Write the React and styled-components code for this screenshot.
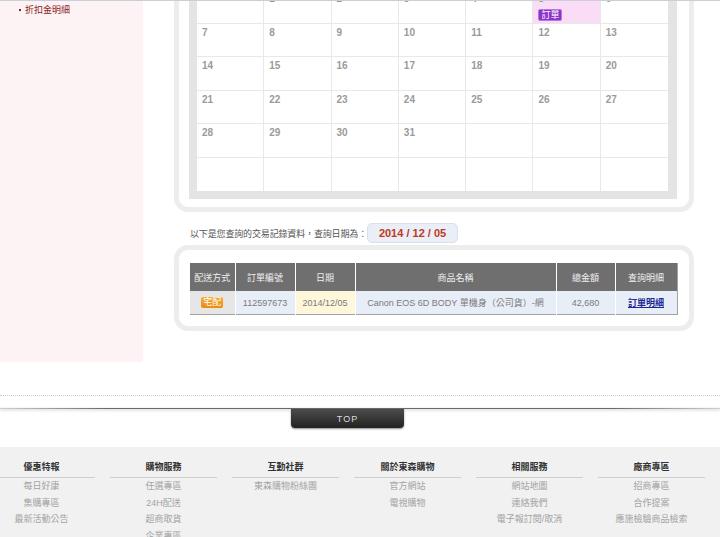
import React from "react";
import styled, { createGlobalStyle } from "styled-components";

const GlobalStyle = createGlobalStyle`
  html, body { margin: 0; padding: 0; background: #fff; }
  body {
    width: 720px;
    overflow: hidden;
    font-family: "Liberation Sans", Arial, "Noto Sans CJK TC", sans-serif;
  }
`;

const Page = styled.div`
  border-top: 1px solid #c9ced7;
`;

const Main = styled.div`
  display: flex;
  align-items: flex-start;
  overflow: hidden;
`;

const Sidebar = styled.aside`
  flex-shrink: 0;
  box-sizing: border-box;
  width: 143px;
  height: 361px;
  padding: 2px 0 0 19px;
  background: #fdf3f4;
`;

const SideLink = styled.a`
  display: flex;
  align-items: center;
  gap: 4px;
  font-size: 9px;
  line-height: 14px;
  color: #8b2323;
  text-decoration: none;
  &::before {
    content: "";
    width: 2px;
    height: 2px;
    background: #8b2323;
  }
`;

const Content = styled.div`
  display: flex;
  flex-direction: column;
  width: 520px;
  margin: -24px 0 0 31px;
`;

const Panel = styled.section`
  border: 5px solid #ededed;
  border-radius: 14px;
  background: #fff;
  padding: ${(p) => p.$pad};
  margin-top: ${(p) => p.$mt || 0}px;
`;

const CalFrame = styled.div`
  border: 8px solid #e4e4e4;
  border-right-width: 9px;
  display: grid;
  grid-template-columns: repeat(7, 1fr);
  background: #fff;
`;

const DayCell = styled.div`
  box-sizing: border-box;
  height: 33.5px;
  padding: 4px 5px 0;
  border-right: ${(p) => (p.$lastCol ? "none" : "1px solid #e8e8e8")};
  border-bottom: ${(p) => (p.$lastRow ? "none" : "1px solid #e8e8e8")};
  background: ${(p) => (p.$active ? "#fbdcf7" : "#fff")};
`;

const DayNum = styled.div`
  font-size: 10px;
  line-height: 10px;
  font-weight: bold;
  color: #9a9a9a;
  height: 10px;
`;

const OrderTag = styled.span`
  display: inline-block;
  margin-top: 4px;
  padding: 0 2px;
  font-size: 9px;
  line-height: 10px;
  color: #fff;
  background: #8a33c8;
  border: 1px solid #b57ae0;
  border-radius: 2px;
`;

const InfoRow = styled.div`
  display: flex;
  align-items: center;
  margin-top: 11px;
  padding-left: 16px;
  font-size: 9px;
  letter-spacing: -0.15px;
  color: #555;
`;

const DateBox = styled.div`
  box-sizing: border-box;
  width: 91px;
  height: 20px;
  display: flex;
  align-items: center;
  justify-content: center;
  background: #e9eef7;
  border: 1px solid #d9dfeb;
  border-radius: 5px;
  font-size: 11px;
  font-weight: bold;
  letter-spacing: 0;
  color: #c0391f;
`;

const Table = styled.table`
  width: 100%;
  border-collapse: collapse;
  table-layout: fixed;
  border-right: 1px solid #a3a3a3;
  border-bottom: 1px solid #a3a3a3;
`;

const Th = styled.th`
  height: 28px;
  padding: 0;
  background: #6f6f6f;
  color: #f0f0f0;
  font-size: 9px;
  font-weight: normal;
  text-align: center;
  border-right: 1px solid #fff;
  &:last-child { border-right: none; }
`;

const Td = styled.td`
  height: 23px;
  padding: 0;
  font-size: 9px;
  color: #7a7a7a;
  text-align: center;
  white-space: nowrap;
  background: ${(p) => p.$bg};
  border-right: 1px solid #fff;
  &:last-child { border-right: none; }
`;

const ShipTag = styled.span`
  display: inline-block;
  padding: 0 2px;
  font-size: 9px;
  line-height: 11px;
  color: #fff;
  background: linear-gradient(#f8ac3a, #ea8a10);
  border-radius: 2px;
`;

const DetailLink = styled.a`
  color: #1b2894;
  font-weight: bold;
  text-decoration: underline;
`;

const Dotted = styled.div`
  margin-top: 33px;
  border-top: 1px dotted #cdcdcd;
`;

const Rail = styled.div`
  margin-top: 12px;
  height: 1px;
  background: linear-gradient(to right, #d0d0d0, #6a6a6a 15%, #6a6a6a 85%, #d0d0d0);
  box-shadow: 0 1px 3px rgba(0, 0, 0, 0.3);
`;

const TopTab = styled.a`
  display: flex;
  align-items: center;
  justify-content: center;
  width: 113px;
  height: 19px;
  margin-left: 291px;
  background: linear-gradient(#4c4c4c, #222);
  border-radius: 0 0 4px 4px;
  box-shadow: 0 1px 2px rgba(0, 0, 0, 0.45);
  color: #dcdcdc;
  font-size: 9px;
  letter-spacing: 1px;
  text-decoration: none;
`;

const Footer = styled.footer`
  margin-top: 19px;
  height: 90px;
  background: #f1f1f1;
  padding-top: 14px;
  box-sizing: border-box;
  overflow: hidden;
`;

const FooterGrid = styled.div`
  display: grid;
  grid-template-columns: repeat(6, 107px);
  column-gap: 15px;
  margin-left: -12px;
`;

const FooterCol = styled.div`
  display: flex;
  flex-direction: column;
  text-align: center;
`;

const FooterHead = styled.div`
  font-size: 9px;
  line-height: 12px;
  font-weight: bold;
  color: #333;
  padding-bottom: 4px;
  border-bottom: 1px solid #cfcfcf;
`;

const FooterLink = styled.a`
  font-size: 9px;
  line-height: 16.5px;
  color: #a3a3a3;
  text-decoration: none;
`;

const weeks = [
  [null, 1, 2, 3, 4, 5, 6],
  [7, 8, 9, 10, 11, 12, 13],
  [14, 15, 16, 17, 18, 19, 20],
  [21, 22, 23, 24, 25, 26, 27],
  [28, 29, 30, 31, null, null, null],
  [null, null, null, null, null, null, null],
];

const footerCols = [
  { title: "優惠特報", links: ["每日好康", "集購專區", "最新活動公告"] },
  { title: "購物服務", links: ["任選專區", "24H配送", "超商取貨", "企業專區"] },
  { title: "互動社群", links: ["東森購物粉絲團"] },
  { title: "關於東森購物", links: ["官方網站", "電視購物"] },
  { title: "相關服務", links: ["網站地圖", "連絡我們", "電子報訂閱/取消"] },
  { title: "廠商專區", links: ["招商專區", "合作提案", "應施檢驗商品檢索"] },
];

export default function App() {
  return (
    <>
      <GlobalStyle />
      <Page>
        <Main>
          <Sidebar>
            <SideLink href="#">折扣金明細</SideLink>
          </Sidebar>
          <Content>
            <Panel $pad="0 12px 8px 10px">
              <CalFrame>
                {weeks.map((week, wi) =>
                  week.map((d, di) => (
                    <DayCell
                      key={`${wi}-${di}`}
                      $lastCol={di === 6}
                      $lastRow={wi === weeks.length - 1}
                      $active={d === 5}
                    >
                      <DayNum>{d ?? ""}</DayNum>
                      {d === 5 && <OrderTag>訂單</OrderTag>}
                    </DayCell>
                  ))
                )}
              </CalFrame>
            </Panel>
            <InfoRow>
              <span>以下是您查詢的交易記錄資料，查詢日期為：</span>
              <DateBox>2014 / 12 / 05</DateBox>
            </InfoRow>
            <Panel $pad="13px 12px 11px 11px" $mt={2}>
              <Table>
                <colgroup>
                  <col style={{ width: 45 }} />
                  <col style={{ width: 60 }} />
                  <col style={{ width: 60 }} />
                  <col style={{ width: 201 }} />
                  <col style={{ width: 59 }} />
                  <col style={{ width: 62 }} />
                </colgroup>
                <thead>
                  <tr>
                    <Th>配送方式</Th>
                    <Th>訂單編號</Th>
                    <Th>日期</Th>
                    <Th>商品名稱</Th>
                    <Th>總金額</Th>
                    <Th>查詢明細</Th>
                  </tr>
                </thead>
                <tbody>
                  <tr>
                    <Td $bg="#e6e6e6"><ShipTag>宅配</ShipTag></Td>
                    <Td $bg="#e8eef8">112597673</Td>
                    <Td $bg="#fef7dc">2014/12/05</Td>
                    <Td $bg="#e8eef8">Canon EOS 6D BODY 單機身（公司貨）-網</Td>
                    <Td $bg="#e8eef8">42,680</Td>
                    <Td $bg="#e8eef8"><DetailLink href="#">訂單明細</DetailLink></Td>
                  </tr>
                </tbody>
              </Table>
            </Panel>
          </Content>
        </Main>
        <Dotted />
        <Rail />
        <TopTab href="#">TOP</TopTab>
        <Footer>
          <FooterGrid>
            {footerCols.map((c) => (
              <FooterCol key={c.title}>
                <FooterHead>{c.title}</FooterHead>
                {c.links.map((l) => (
                  <FooterLink key={l} href="#">{l}</FooterLink>
                ))}
              </FooterCol>
            ))}
          </FooterGrid>
        </Footer>
      </Page>
    </>
  );
}
